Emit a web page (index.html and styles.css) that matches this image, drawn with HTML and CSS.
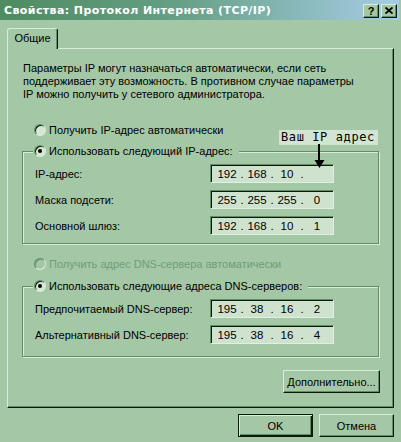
FILE: index.html
```html
<!DOCTYPE html>
<html lang="ru">
<head>
<meta charset="utf-8">
<title>Свойства: Протокол Интернета (TCP/IP)</title>
<link rel="stylesheet" href="styles.css">
</head>
<body>
<div class="titlebar">
  <span class="title">Свойства: Протокол Интернета (TCP/IP)</span>
  <div class="tb-buttons">
    <span class="tb-btn help">?</span>
    <span class="tb-btn close"><svg width="8" height="7" viewBox="0 0 8 7"><path d="M0.5 0.5 L7.5 6.5 M7.5 0.5 L0.5 6.5" stroke="#000" stroke-width="1.8" fill="none"/></svg></span>
  </div>
</div>
<div class="main">
  <div class="tabs"><div class="tab">Общие</div></div>
  <div class="panel">
    <p class="desc">Параметры IP могут назначаться автоматически, если сеть<br>поддерживает эту возможность. В противном случае параметры<br>IP можно получить у сетевого администратора.</p>
    <div class="radio r-first"><span class="dot"></span>Получить IP-адрес автоматически</div>
    <fieldset class="group g-ip">
      <legend class="legend-ip"><span class="radio"><span class="dot checked"></span>Использовать следующий IP-адрес:</span></legend>
      <div class="fields">
        <span>IP-адрес:</span>
        <div class="ipbox"><span>192</span><i>.</i><span>168</span><i>.</i><span>10</span><i>.</i><span></span></div>
        <span>Маска подсети:</span>
        <div class="ipbox"><span>255</span><i>.</i><span>255</span><i>.</i><span>255</span><i>.</i><span>0</span></div>
        <span>Основной шлюз:</span>
        <div class="ipbox"><span>192</span><i>.</i><span>168</span><i>.</i><span>10</span><i>.</i><span>1</span></div>
      </div>
    </fieldset>
    <div class="radio disabled r-dns"><span class="dot"></span>Получить адрес DNS-сервера автоматически</div>
    <fieldset class="group g-dns">
      <legend class="legend-dns"><span class="radio"><span class="dot checked"></span>Использовать следующие адреса DNS-серверов:</span></legend>
      <div class="fields">
        <span>Предпочитаемый DNS-сервер:</span>
        <div class="ipbox"><span>195</span><i>.</i><span>38</span><i>.</i><span>16</span><i>.</i><span>2</span></div>
        <span>Альтернативный DNS-сервер:</span>
        <div class="ipbox"><span>195</span><i>.</i><span>38</span><i>.</i><span>16</span><i>.</i><span>4</span></div>
      </div>
    </fieldset>
    <div class="btn btn-more">Дополнительно...</div>
  </div>
  <div class="actions">
    <div class="btn btn-default">OK</div>
    <div class="btn">Отмена</div>
  </div>
</div>
<div class="note">Ваш IP адрес</div>
<svg class="arrow" width="11" height="25" viewBox="0 0 11 25"><rect x="4" y="0" width="2" height="17" fill="#000"/><path d="M0.5 16 L10.5 16 L5.5 24 Z" fill="#000"/></svg>
</body>
</html>
```

FILE: styles.css
```css
* { box-sizing: border-box; }
html, body { margin: 0; padding: 0; }
body {
  width: 401px;
  height: 442px;
  overflow: hidden;
  position: relative;
  background: #a4c7a6;
  font-family: "Liberation Sans", Arial, sans-serif;
  font-size: 11px;
  color: #000;
}
.titlebar {
  height: 20px;
  margin-right: 2px;
  padding: 0 2px 0 4px;
  display: flex;
  align-items: center;
  justify-content: space-between;
  background: linear-gradient(to right, #4e8b60 0%, #66a086 45%, #a6cde6 100%);
}
.title {
  color: #fff;
  font-family: "DejaVu Sans", sans-serif;
  font-weight: bold;
  font-size: 11px;
  letter-spacing: 0.4px;
  white-space: nowrap;
}
.tb-buttons { display: flex; gap: 2px; margin-top: 1px; }
.tb-btn {
  width: 16px;
  height: 14px;
  display: flex;
  align-items: center;
  justify-content: center;
  background: #a4c7a6;
  border: 1px solid;
  border-color: #d8ecd8 #0c1a0e #0c1a0e #d8ecd8;
  box-shadow: inset -1px -1px 0 #5f9065;
  font-family: "Liberation Sans", Arial, sans-serif;
  font-weight: bold;
  font-size: 11px;
  line-height: 12px;
}
.main { padding: 8px 7px 0 7px; }
.tabs { display: flex; height: 20px; position: relative; z-index: 1; }
.tab {
  width: 51px;
  height: 21px;
  border: 1px solid;
  border-bottom: 0;
  border-color: #d8ecd8 #0c1a0e transparent #d8ecd8;
  border-radius: 3px 3px 0 0;
  box-shadow: inset -1px 0 0 #5f9065;
  background: #a4c7a6;
  text-align: center;
  line-height: 18px;
}
.panel {
  height: 360px;
  border: 1px solid;
  border-color: #d8ecd8 #0c1a0e #0c1a0e #d8ecd8;
  box-shadow: inset -1px -1px 0 #5f9065;
  display: flex;
  flex-direction: column;
  align-items: flex-start;
}
.desc { margin: 13px 0 0 15px; line-height: 13px; }
.radio {
  display: flex;
  align-items: center;
  gap: 3px;
  height: 14px;
  line-height: 14px;
  white-space: nowrap;
}
.r-first { margin: 22px 0 0 26px; }
.r-dns { margin: 13px 0 0 26px; }
.dot {
  flex: none;
  width: 12px;
  height: 12px;
  border-radius: 50%;
  background: #d6e8d4;
  border: 1px solid;
  border-color: #5f9065 #d8ecd8 #d8ecd8 #5f9065;
  box-shadow: inset 1px 1px 0 #0c1a0e;
  display: grid;
  place-items: center;
}
.dot.checked::after {
  content: "";
  width: 4px;
  height: 4px;
  border-radius: 50%;
  background: #000;
}
.disabled { color: #6f9f73; }
.disabled .dot { background: #a4c7a6; box-shadow: inset 1px 1px 0 #6f9f73; }
.group {
  width: 357px;
  min-width: 0;
  margin: 7px 0 0 14px;
  padding: 0 0 8px 0;
  border: 1px solid #5f9065;
  box-shadow: inset 1px 1px 0 #d8ecd8, 1px 1px 0 #d8ecd8;
}
.g-dns { margin-top: 8px; padding-bottom: 12px; }
.group legend {
  margin-left: 10px;
  padding: 0 6px 0 1px;
  height: 14px;
  background: #a4c7a6;
}
.legend-dns { padding-right: 8px; }
.fields {
  display: grid;
  grid-template-columns: 175px 124px;
  row-gap: 7px;
  align-items: center;
  padding: 6px 0 0 12px;
}
.ipbox {
  height: 19px;
  display: flex;
  align-items: center;
  padding-left: 3px;
  background: #cfe2cd;
  border: 1px solid;
  border-color: #5f9065 #e0f0e0 #e0f0e0 #5f9065;
  box-shadow: inset 1px 1px 0 #0c1a0e;
  font-size: 11.5px;
}
.ipbox span { width: 26px; text-align: center; }
.ipbox i { width: 4px; font-style: normal; text-align: center; }
.btn {
  height: 23px;
  display: flex;
  align-items: center;
  justify-content: center;
  background: #a4c7a6;
  border: 1px solid;
  border-color: #d8ecd8 #0c1a0e #0c1a0e #d8ecd8;
  box-shadow: inset -1px -1px 0 #5f9065;
}
.btn-more { width: 97px; margin: 13px 13px 0 0; align-self: flex-end; }
.actions { display: flex; justify-content: flex-end; gap: 6px; margin-top: 6px; }
.actions .btn { width: 75px; }
.btn-default {
  border-color: #0c1a0e;
  box-shadow: inset 1px 1px 0 #d8ecd8, inset -1px -1px 0 #0c1a0e, inset -2px -2px 0 #5f9065;
}
.note {
  position: absolute;
  left: 279px;
  top: 130px;
  width: 99px;
  height: 15px;
  background: #d3e5d2;
  font-family: "DejaVu Sans Mono", monospace;
  font-size: 12px;
  letter-spacing: 0.6px;
  line-height: 15px;
  padding-left: 2px;
  white-space: nowrap;
}
.arrow { position: absolute; left: 314px; top: 144px; }
```
